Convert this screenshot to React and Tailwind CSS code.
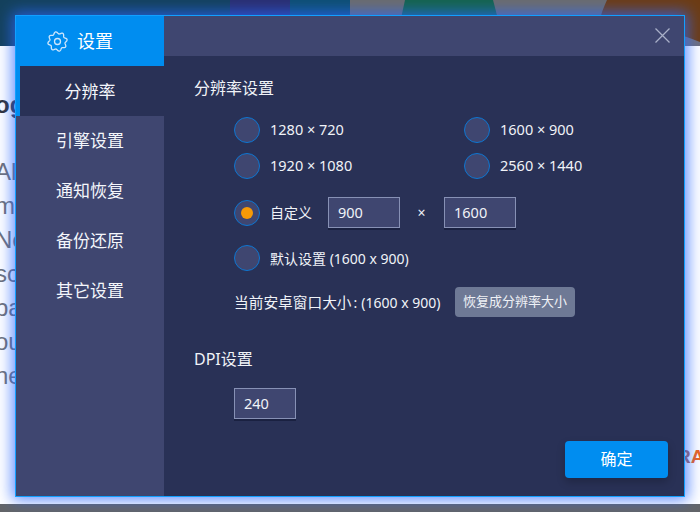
import React from "react";

const FONT = { fontFamily: '"Noto Sans", "Noto Sans CJK SC", sans-serif' };
const BG_FONT = { fontFamily: '"Liberation Sans", sans-serif' };

const gearPoints = Array.from({ length: 120 }, (_, i) => {
  const t = (i / 120) * Math.PI * 2;
  const r = 8.7 + 1.05 * Math.cos(8 * t + Math.PI / 2);
  return `${(10.5 + r * Math.cos(t)).toFixed(2)},${(10.5 + r * Math.sin(t)).toFixed(2)}`;
}).join(" ");

function Gear() {
  return (
    <svg width="21" height="21" viewBox="0 0 21 21" fill="none" stroke="#cfe6fb" strokeWidth="1.300" className="shrink-0">
      <polygon points={gearPoints} />
      <circle cx="10.500" cy="10.500" r="3" />
    </svg>
  );
}

function Radio({ checked }) {
  return (
    <span className="flex h-[26px] w-[26px] shrink-0 items-center justify-center rounded-full border-[1.5px] border-[#0d76d2] bg-[#3f4670]">
      {checked && <span className="h-3 w-3 rounded-full bg-[#f79a06]" />}
    </span>
  );
}

function Option({ label }) {
  return (
    <div className="flex h-[26px] items-center gap-[10px] text-[14.500px] text-[#f0f3f8]">
      <Radio />
      <span>{label}</span>
    </div>
  );
}

function Field({ value, w }) {
  return (
    <div className={`flex h-[31px] items-center border border-[#8791b5] bg-[#3f4670] pl-[9px] text-[14.500px] text-[#f0f3f8] shadow-[0_2px_0_rgba(15,20,50,0.55)] ${w}`}>
      {value}
    </div>
  );
}

const NAV = ["引擎设置", "通知恢复", "备份还原", "其它设置"];
const BG_LINES = ["Al", "m", "Ne", "sc", "ba", "ou", "ne"];

export default function App() {
  return (
    <div style={FONT} className="relative h-[512px] w-[700px] overflow-hidden bg-white">
      <svg width="700" height="46" viewBox="0 0 700 46" className="block">
        <rect width="700" height="46" fill="#6c6c6c" />
        <rect width="350" height="46" fill="#14415c" />
        <rect x="230" width="60" height="46" fill="#2a2f70" />
        <rect x="290" width="60" height="46" fill="#0e4f72" />
        <path d="M405 0H493L505 46H395Z" fill="#15644c" />
        <path d="M607 0H700V46H596C596 30 600 15 607 0Z" fill="#6d3c14" />
        <path d="M617 46C625 36 640 32 655 32C675 32 690 38 700 42V46Z" fill="#70707c" />
      </svg>

      <div style={BG_FONT} className="-ml-[5px] pt-[42px] text-[24px] leading-[34px] text-[#6f7177]">
        <div className="mb-[33px] font-bold text-[#2f3136]">og</div>
        {BG_LINES.map((t) => (
          <div key={t}>{t}</div>
        ))}
      </div>

      <span style={BG_FONT} className="absolute left-[677px] top-[444px] whitespace-nowrap text-[19px] font-bold leading-[26px] text-[#f0641a]">
        <span className="text-[#a8604e]">R</span>A
      </span>
      <div className="absolute bottom-0 left-0 right-0 h-[8px] bg-[#636568]" />

      <div className="absolute left-[15px] top-[15px] flex h-[482px] w-[670px] border border-[#12a0ff] shadow-[0_0_14px_3px_rgba(43,104,255,0.75)]">
        <aside className="flex w-[148px] shrink-0 flex-col bg-[#3f4670]">
          <div className="flex h-[50px] items-center gap-[9px] bg-[#008df0] pl-[31px] text-[18px] text-white">
            <Gear />
            <span>设置</span>
          </div>
          <div className="flex h-[50px] items-center justify-center border-l-4 border-[#008df0] bg-[#293156] pr-[4px] pt-[1px] text-[17px] text-[#f4f6fb]">
            分辨率
          </div>
          {NAV.map((n) => (
            <div key={n} className="flex h-[50px] items-center justify-center text-[17px] text-[#f4f6fb]">
              {n}
            </div>
          ))}
        </aside>

        <main className="flex min-w-0 flex-1 flex-col bg-[#293156]">
          <header className="flex h-[40px] shrink-0 items-start justify-end bg-[#3f4670] pr-[14px] pt-[12px]">
            <svg width="15" height="15" viewBox="0 0 15 15" stroke="#a9b0c8" strokeWidth="1.300" fill="none">
              <path d="M.5.5l14 14M14.500.5l-14 14" />
            </svg>
          </header>

          <div className="relative flex flex-1 flex-col pl-[30px] pt-[22px]">
            <h2 className="text-[16px] font-normal leading-[20px] text-[#f0f3f8]">分辨率设置</h2>

            <div className="ml-[40px] mt-[19px] grid w-[360px] grid-cols-[230px_130px] gap-y-[10px]">
              <Option label="1280 × 720" />
              <Option label="1600 × 900" />
              <Option label="1920 × 1080" />
              <Option label="2560 × 1440" />
            </div>

            <div className="ml-[40px] mt-[18px] flex h-[31px] items-center">
              <Radio checked />
              <span className="ml-[10px] w-[58px] text-[14px] text-[#f0f3f8]">自定义</span>
              <Field value="900" w="w-[72px]" />
              <span className="w-[44px] pr-[1px] text-center text-[14px] text-[#f0f3f8]">×</span>
              <Field value="1600" w="w-[72px]" />
            </div>

            <div className="ml-[40px] mt-[17px] flex h-[26px] items-center gap-[10px] text-[14px] text-[#f0f3f8]">
              <Radio />
              <span>默认设置 (1600 x 900)</span>
            </div>

            <div className="ml-[40px] mt-[16px] flex h-[30px] items-center text-[14px] text-[#f0f3f8]">
              <span className="w-[221px] whitespace-nowrap">
                <span className="text-[14.700px]">当前安卓窗口大小</span>
                <span className="ml-[2px] mr-[4px]">:</span>(1600 x 900)
              </span>
              <span className="flex h-[30px] w-[120px] items-center justify-center rounded-[4px] bg-[#6e7995] text-[13px] text-[#eef1f6]">
                恢复成分辨率大小
              </span>
            </div>

            <h2 className="mt-[32px] text-[16px] font-normal leading-[20px] text-[#f0f3f8]">DPI设置</h2>

            <div className="ml-[40px] mt-[19px]">
              <Field value="240" w="w-[62px]" />
            </div>

            <button className="absolute bottom-[18px] right-[16px] h-[37px] w-[103px] rounded-[4px] bg-[#008df0] pb-[1px] text-[16px] text-white shadow-[0_4px_8px_rgba(0,0,0,0.22)]">
              确定
            </button>
          </div>
        </main>
      </div>
    </div>
  );
}
